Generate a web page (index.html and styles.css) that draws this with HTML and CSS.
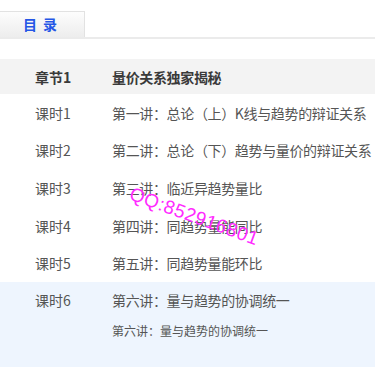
FILE: index.html
```html
<!DOCTYPE html>
<html lang="zh-CN">
<head>
<meta charset="utf-8">
<link rel="stylesheet" href="styles.css">
</head>
<body>
<div class="page">
  <div class="tabs">
    <div class="tab">目 录</div>
  </div>
  <div class="list">
    <div class="row head">
      <div class="c1">章节1</div>
      <div class="c2">量价关系独家揭秘</div>
    </div>
    <div class="row">
      <div class="c1">课时1</div>
      <div class="c2">第一讲：总论（上）K线与趋势的辩证关系</div>
    </div>
    <div class="row">
      <div class="c1">课时2</div>
      <div class="c2">第二讲：总论（下）趋势与量价的辩证关系</div>
    </div>
    <div class="row">
      <div class="c1">课时3</div>
      <div class="c2">第三讲：临近异趋势量比</div>
    </div>
    <div class="row">
      <div class="c1">课时4</div>
      <div class="c2">第四讲：同趋势量能同比</div>
    </div>
    <div class="row">
      <div class="c1">课时5</div>
      <div class="c2">第五讲：同趋势量能环比</div>
    </div>
    <div class="active">
      <div class="row">
        <div class="c1">课时6</div>
        <div class="c2">第六讲：量与趋势的协调统一</div>
      </div>
      <div class="sub">第六讲：量与趋势的协调统一</div>
    </div>
  </div>
  <div class="mark">QQ:852916801</div>
</div>
</body>
</html>
```

FILE: styles.css
```css
html, body {
  margin: 0;
  padding: 0;
  background: #fff;
}
body {
  font-family: "Noto Sans CJK SC", "Noto Sans", sans-serif;
  color: #555;
  width: 375px;
  height: 378px;
  overflow: hidden;
}
.page {
  position: relative;
}
.tabs {
  padding-top: 11px;
  border-bottom: 2px solid #ebebeb;
  display: flex;
}
.tab {
  width: 85px;
  height: 26px;
  box-sizing: border-box;
  border-top: 1px solid #e2e2e2;
  border-right: 1px solid #e2e2e2;
  background: linear-gradient(#fdfdfd, #ededed);
  color: #2456e6;
  font-weight: bold;
  font-size: 14px;
  line-height: 25px;
  text-align: center;
  word-spacing: 3px;
  padding-right: 4px;
}
.list {
  margin-top: 20px;
}
.row {
  display: flex;
  align-items: center;
  height: 37.6px;
  font-size: 14px;
  white-space: nowrap;
}
.row .c1 {
  width: 77px;
  padding-left: 35px;
  flex: none;
}
.row .c2 {
  flex: none;
  letter-spacing: -0.35px;
}
.head {
  height: 35px;
  background: #f3f3f3;
  font-weight: bold;
  color: #3a3a3a;
}
.active {
  background: #eef5fe;
  padding-bottom: 24px;
}
.active .row {
  height: 37px;
}
.sub {
  padding-left: 112px;
  font-size: 12px;
  line-height: 24px;
  color: #555;
}
.mark {
  position: absolute;
  left: 134px;
  top: 183px;
  font-family: "Liberation Sans", sans-serif;
  font-size: 19px;
  color: #ff2bff;
  transform: rotate(20deg);
  transform-origin: 0 0;
  letter-spacing: 0.5px;
}
```
